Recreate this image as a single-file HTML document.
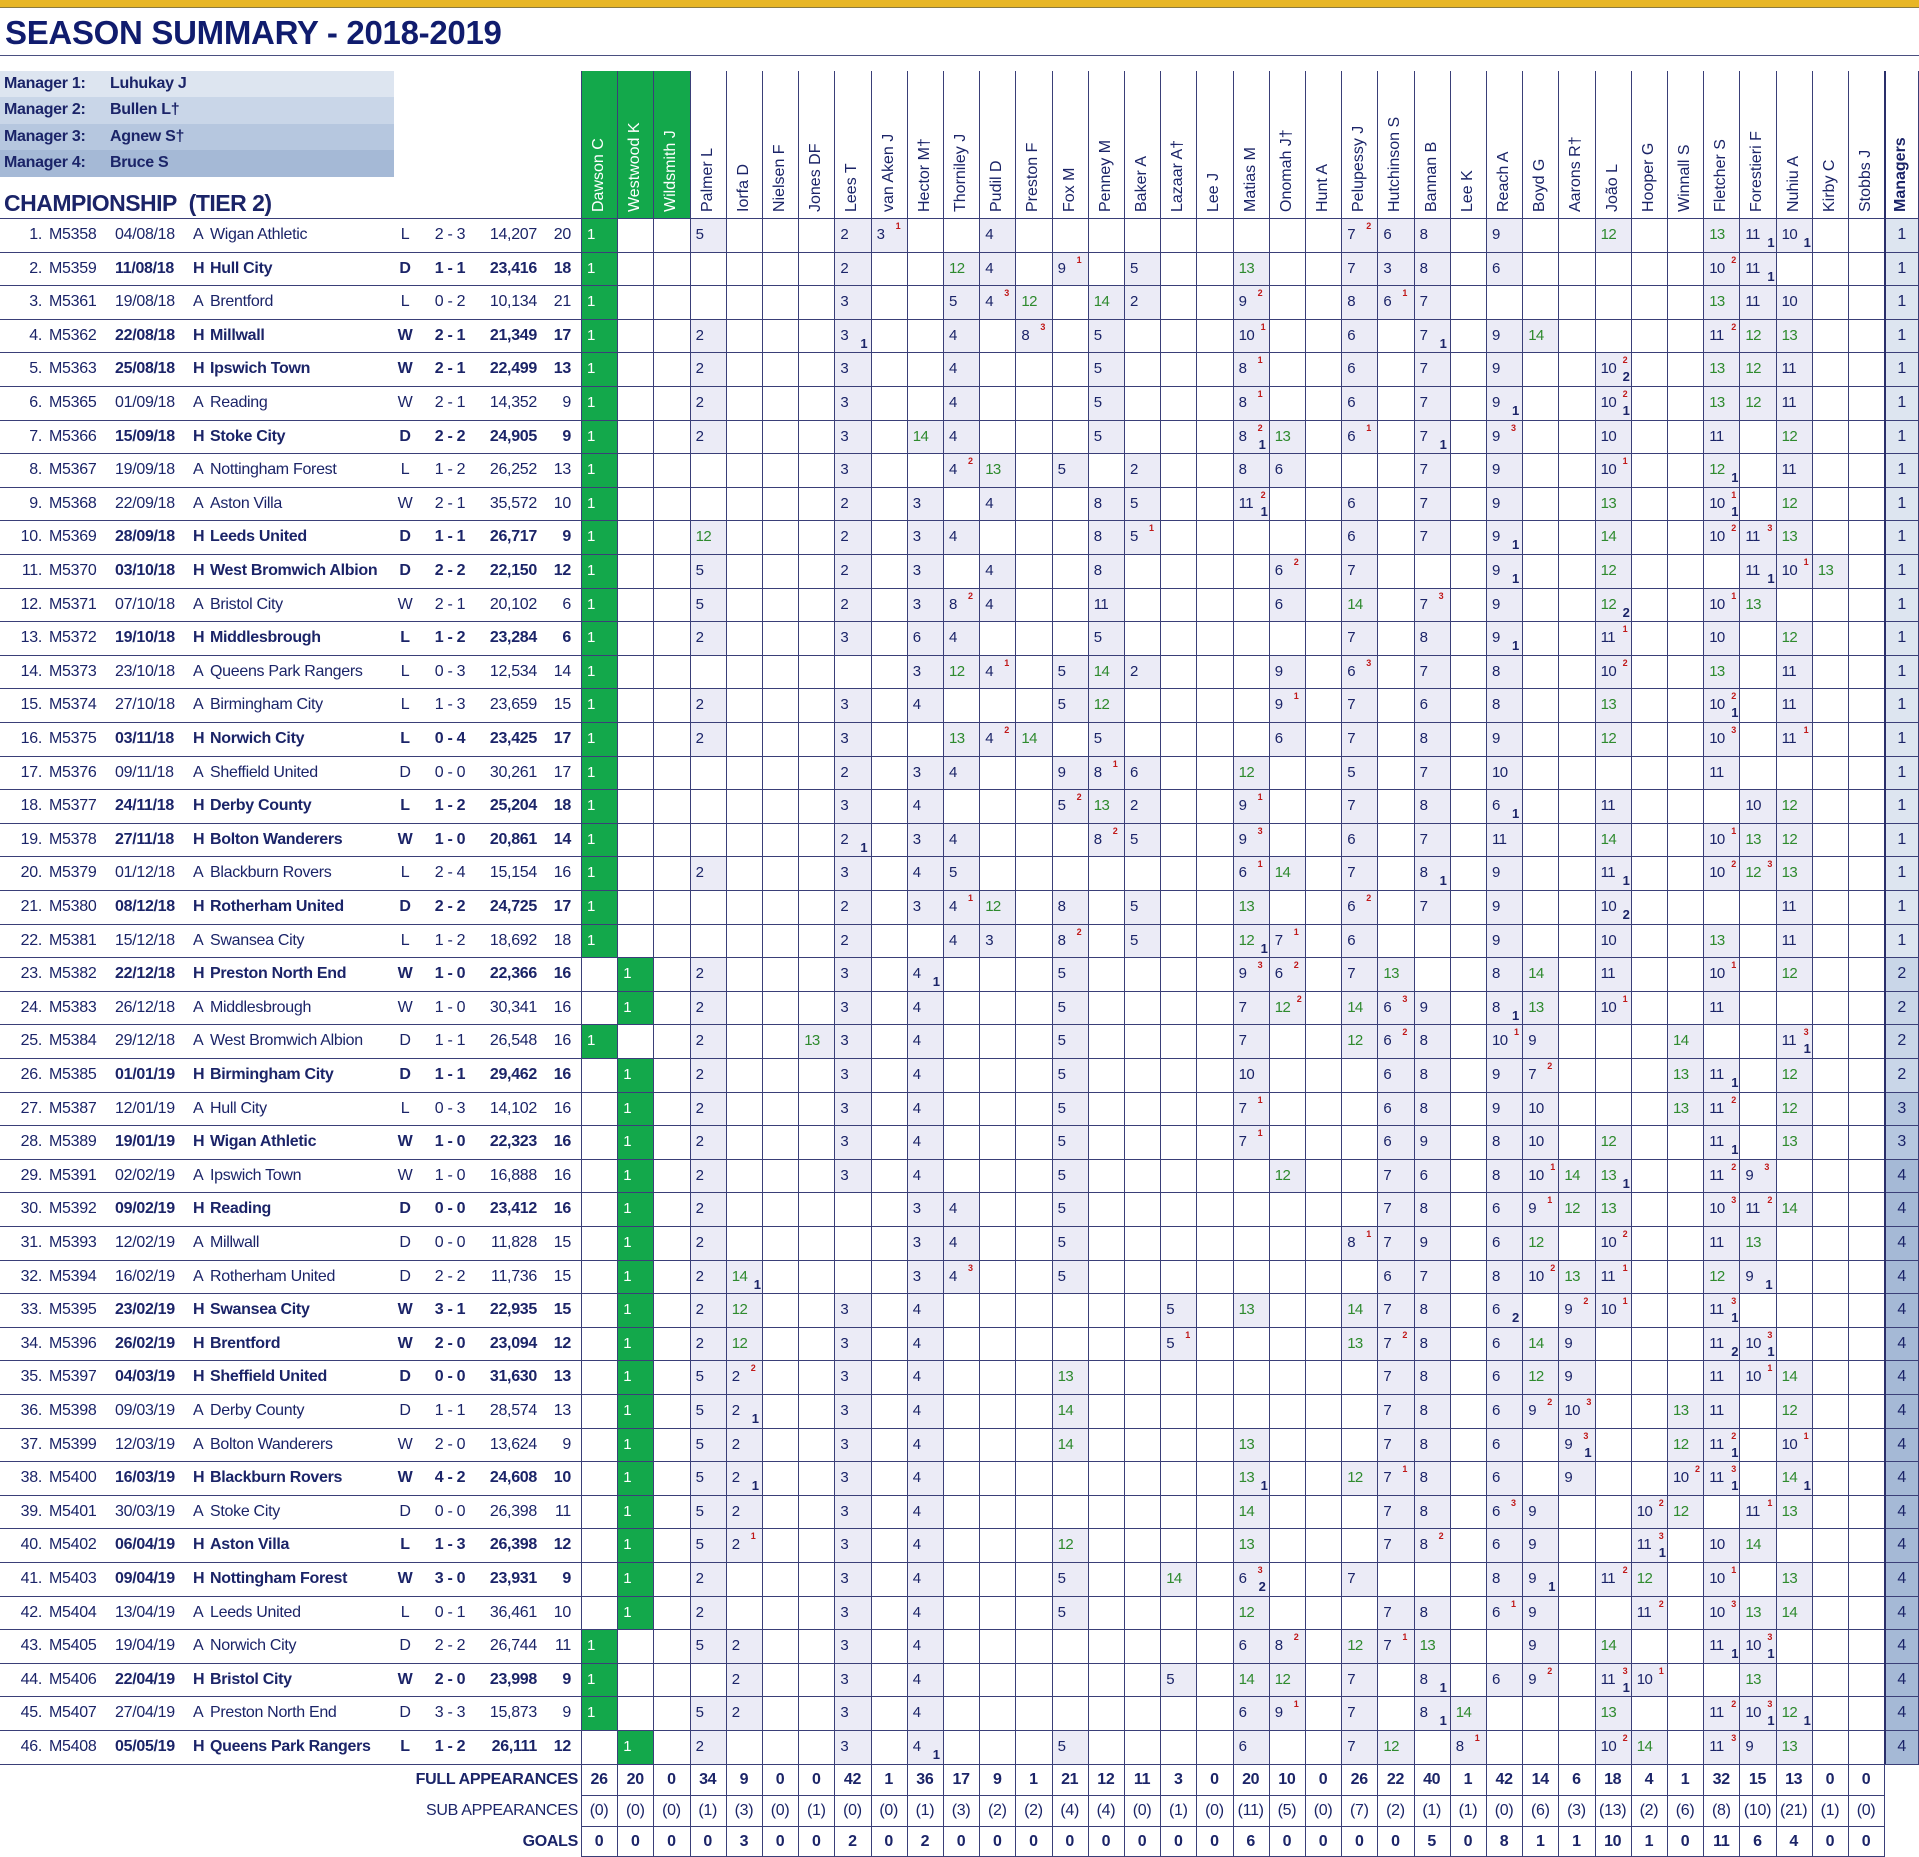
<!DOCTYPE html>
<html><head><meta charset="utf-8">
<style>
html,body{margin:0;padding:0;background:#fff}
#c{position:relative;width:1919px;height:1857px;overflow:hidden;font-family:"Liberation Sans Narrow","Liberation Sans",sans-serif;color:#1b2468}
.a{position:absolute;white-space:nowrap}
.hn{font-family:"Liberation Sans",sans-serif;font-size:16px;line-height:18px;transform-origin:0 0;transform:rotate(-90deg)}
.t{font-size:16px;line-height:16px;letter-spacing:-0.3px}
.n{font-size:15px;line-height:16px;letter-spacing:-0.6px}
.sp{font-family:"Liberation Sans",sans-serif;font-weight:bold;font-size:9px;color:#c01818}
.sb{font-family:"Liberation Sans",sans-serif;font-weight:bold;font-size:13px;color:#1b2468}
</style></head><body>
<div id="c">
<div class="a" style="left:0;top:0;width:1919px;height:7px;background:#e8b626"></div>
<div class="a" style="left:0;top:7px;width:1919px;height:1px;background:#8a7a40"></div>
<div class="a" style="left:5px;top:14px;font-family:'Liberation Sans',sans-serif;font-weight:bold;font-size:33px;color:#101c6e;letter-spacing:-0.3px">SEASON SUMMARY - 2018-2019</div>
<div class="a" style="left:0;top:55px;width:1919px;height:1px;background:#4a4f80"></div>
</div>
<script>
var C=document.getElementById('c');
function el(h){C.insertAdjacentHTML('beforeend',h);}
var mgrBg=['#dde5f0','#c9d6e8','#b6c7df','#a5b9d6'];
var mgrs=['Luhukay J','Bullen L\u2020','Agnew S\u2020','Bruce S'];
for(var i=0;i<4;i++){var y=71+i*26.3;
el('<div class="a" style="left:0;top:'+y+'px;width:394px;height:27px;background:'+mgrBg[i]+'"></div>');
el('<div class="a t" style="left:4px;top:'+(y+5)+'px;font-weight:bold">Manager '+(i+1)+':</div>');
el('<div class="a t" style="left:110px;top:'+(y+5)+'px;font-weight:bold">'+mgrs[i]+'</div>');}
el('<div class="a" style="left:4px;top:190px;font-size:23px;font-weight:bold;letter-spacing:-0.5px">CHAMPIONSHIP&nbsp; (TIER 2)</div>');
var names=['Dawson C','Westwood K','Wildsmith J','Palmer L','Iorfa D','Nielsen F','Jones DF','Lees T','van Aken J','Hector M\u2020','Thorniley J','Pudil D','Preston F','Fox M','Penney M','Baker A','Lazaar A\u2020','Lee J','Matias M','Onomah J\u2020','Hunt A','Pelupessy J','Hutchinson S','Bannan B','Lee K','Reach A','Boyd G','Aarons R\u2020','Jo\u00e3o L','Hooper G','Winnall S','Fletcher S','Forestieri F','Nuhiu A','Kirby C','Stobbs J'];
var X0=581,CW=36.2,MX=1884.3,MW=34.7,Y0=218,RH=33.6;
function cx(j){return X0+j*CW;}
el('<div class="a" style="left:'+X0+'px;top:71px;width:'+(3*CW)+'px;height:147px;background:#13a84b"></div>');
for(var j=0;j<36;j++){
el('<div class="a hn" style="left:'+(cx(j)+9)+'px;top:212px;color:'+(j<3?'#fff':'#1b2468')+'">'+names[j]+'</div>');}
el('<div class="a hn" style="left:'+(MX+8)+'px;top:212px;font-weight:bold">Managers</div>');
var rows=[
"1|M5358|04/08/18|A|Wigan Athletic|L|2 - 3|14,207|20|0:1 3:5 7:2 8:3^1 11:4 21:7^2 22:6 23:8 25:9 28:12 31:13 32:11_1 33:10_1",
"2|M5359|11/08/18|H|Hull City|D|1 - 1|23,416|18|0:1 7:2 10:12 11:4 13:9^1 15:5 18:13 21:7 22:3 23:8 25:6 31:10^2 32:11_1",
"3|M5361|19/08/18|A|Brentford|L|0 - 2|10,134|21|0:1 7:3 10:5 11:4^3 12:12 14:14 15:2 18:9^2 21:8 22:6^1 23:7 31:13 32:11 33:10",
"4|M5362|22/08/18|H|Millwall|W|2 - 1|21,349|17|0:1 3:2 7:3_1 10:4 12:8^3 14:5 18:10^1 21:6 23:7_1 25:9 26:14 31:11^2 32:12 33:13",
"5|M5363|25/08/18|H|Ipswich Town|W|2 - 1|22,499|13|0:1 3:2 7:3 10:4 14:5 18:8^1 21:6 23:7 25:9 28:10^2_2 31:13 32:12 33:11",
"6|M5365|01/09/18|A|Reading|W|2 - 1|14,352|9|0:1 3:2 7:3 10:4 14:5 18:8^1 21:6 23:7 25:9_1 28:10^2_1 31:13 32:12 33:11",
"7|M5366|15/09/18|H|Stoke City|D|2 - 2|24,905|9|0:1 3:2 7:3 9:14 10:4 14:5 18:8^2_1 19:13 21:6^1 23:7_1 25:9^3 28:10 31:11 33:12",
"8|M5367|19/09/18|A|Nottingham Forest|L|1 - 2|26,252|13|0:1 7:3 10:4^2 11:13 13:5 15:2 18:8 19:6 23:7 25:9 28:10^1 31:12_1 33:11",
"9|M5368|22/09/18|A|Aston Villa|W|2 - 1|35,572|10|0:1 7:2 9:3 11:4 14:8 15:5 18:11^2_1 21:6 23:7 25:9 28:13 31:10^1_1 33:12",
"10|M5369|28/09/18|H|Leeds United|D|1 - 1|26,717|9|0:1 3:12 7:2 9:3 10:4 14:8 15:5^1 21:6 23:7 25:9_1 28:14 31:10^2 32:11^3 33:13",
"11|M5370|03/10/18|H|West Bromwich Albion|D|2 - 2|22,150|12|0:1 3:5 7:2 9:3 11:4 14:8 19:6^2 21:7 25:9_1 28:12 32:11_1 33:10^1 34:13",
"12|M5371|07/10/18|A|Bristol City|W|2 - 1|20,102|6|0:1 3:5 7:2 9:3 10:8^2 11:4 14:11 19:6 21:14 23:7^3 25:9 28:12_2 31:10^1 32:13",
"13|M5372|19/10/18|H|Middlesbrough|L|1 - 2|23,284|6|0:1 3:2 7:3 9:6 10:4 14:5 21:7 23:8 25:9_1 28:11^1 31:10 33:12",
"14|M5373|23/10/18|A|Queens Park Rangers|L|0 - 3|12,534|14|0:1 9:3 10:12 11:4^1 13:5 14:14 15:2 19:9 21:6^3 23:7 25:8 28:10^2 31:13 33:11",
"15|M5374|27/10/18|A|Birmingham City|L|1 - 3|23,659|15|0:1 3:2 7:3 9:4 13:5 14:12 19:9^1 21:7 23:6 25:8 28:13 31:10^2_1 33:11",
"16|M5375|03/11/18|H|Norwich City|L|0 - 4|23,425|17|0:1 3:2 7:3 10:13 11:4^2 12:14 14:5 19:6 21:7 23:8 25:9 28:12 31:10^3 33:11^1",
"17|M5376|09/11/18|A|Sheffield United|D|0 - 0|30,261|17|0:1 7:2 9:3 10:4 13:9 14:8^1 15:6 18:12 21:5 23:7 25:10 31:11",
"18|M5377|24/11/18|H|Derby County|L|1 - 2|25,204|18|0:1 7:3 9:4 13:5^2 14:13 15:2 18:9^1 21:7 23:8 25:6_1 28:11 32:10 33:12",
"19|M5378|27/11/18|H|Bolton Wanderers|W|1 - 0|20,861|14|0:1 7:2_1 9:3 10:4 14:8^2 15:5 18:9^3 21:6 23:7 25:11 28:14 31:10^1 32:13 33:12",
"20|M5379|01/12/18|A|Blackburn Rovers|L|2 - 4|15,154|16|0:1 3:2 7:3 9:4 10:5 18:6^1 19:14 21:7 23:8_1 25:9 28:11_1 31:10^2 32:12^3 33:13",
"21|M5380|08/12/18|H|Rotherham United|D|2 - 2|24,725|17|0:1 7:2 9:3 10:4^1 11:12 13:8 15:5 18:13 21:6^2 23:7 25:9 28:10_2 33:11",
"22|M5381|15/12/18|A|Swansea City|L|1 - 2|18,692|18|0:1 7:2 10:4 11:3 13:8^2 15:5 18:12_1 19:7^1 21:6 25:9 28:10 31:13 33:11",
"23|M5382|22/12/18|H|Preston North End|W|1 - 0|22,366|16|1:1 3:2 7:3 9:4_1 13:5 18:9^3 19:6^2 21:7 22:13 25:8 26:14 28:11 31:10^1 33:12",
"24|M5383|26/12/18|A|Middlesbrough|W|1 - 0|30,341|16|1:1 3:2 7:3 9:4 13:5 18:7 19:12^2 21:14 22:6^3 23:9 25:8_1 26:13 28:10^1 31:11",
"25|M5384|29/12/18|A|West Bromwich Albion|D|1 - 1|26,548|16|0:1 3:2 6:13 7:3 9:4 13:5 18:7 21:12 22:6^2 23:8 25:10^1 26:9 30:14 33:11^3_1",
"26|M5385|01/01/19|H|Birmingham City|D|1 - 1|29,462|16|1:1 3:2 7:3 9:4 13:5 18:10 22:6 23:8 25:9 26:7^2 30:13 31:11_1 33:12",
"27|M5387|12/01/19|A|Hull City|L|0 - 3|14,102|16|1:1 3:2 7:3 9:4 13:5 18:7^1 22:6 23:8 25:9 26:10 30:13 31:11^2 33:12",
"28|M5389|19/01/19|H|Wigan Athletic|W|1 - 0|22,323|16|1:1 3:2 7:3 9:4 13:5 18:7^1 22:6 23:9 25:8 26:10 28:12 31:11_1 33:13",
"29|M5391|02/02/19|A|Ipswich Town|W|1 - 0|16,888|16|1:1 3:2 7:3 9:4 13:5 19:12 22:7 23:6 25:8 26:10^1 27:14 28:13_1 31:11^2 32:9^3",
"30|M5392|09/02/19|H|Reading|D|0 - 0|23,412|16|1:1 3:2 9:3 10:4 13:5 22:7 23:8 25:6 26:9^1 27:12 28:13 31:10^3 32:11^2 33:14",
"31|M5393|12/02/19|A|Millwall|D|0 - 0|11,828|15|1:1 3:2 9:3 10:4 13:5 21:8^1 22:7 23:9 25:6 26:12 28:10^2 31:11 32:13",
"32|M5394|16/02/19|A|Rotherham United|D|2 - 2|11,736|15|1:1 3:2 4:14_1 9:3 10:4^3 13:5 22:6 23:7 25:8 26:10^2 27:13 28:11^1 31:12 32:9_1",
"33|M5395|23/02/19|H|Swansea City|W|3 - 1|22,935|15|1:1 3:2 4:12 7:3 9:4 16:5 18:13 21:14 22:7 23:8 25:6_2 27:9^2 28:10^1 31:11^3_1",
"34|M5396|26/02/19|H|Brentford|W|2 - 0|23,094|12|1:1 3:2 4:12 7:3 9:4 16:5^1 21:13 22:7^2 23:8 25:6 26:14 27:9 31:11_2 32:10^3_1",
"35|M5397|04/03/19|H|Sheffield United|D|0 - 0|31,630|13|1:1 3:5 4:2^2 7:3 9:4 13:13 22:7 23:8 25:6 26:12 27:9 31:11 32:10^1 33:14",
"36|M5398|09/03/19|A|Derby County|D|1 - 1|28,574|13|1:1 3:5 4:2_1 7:3 9:4 13:14 22:7 23:8 25:6 26:9^2 27:10^3 30:13 31:11 33:12",
"37|M5399|12/03/19|A|Bolton Wanderers|W|2 - 0|13,624|9|1:1 3:5 4:2 7:3 9:4 13:14 18:13 22:7 23:8 25:6 27:9^3_1 30:12 31:11^2_1 33:10^1",
"38|M5400|16/03/19|H|Blackburn Rovers|W|4 - 2|24,608|10|1:1 3:5 4:2_1 7:3 9:4 18:13_1 21:12 22:7^1 23:8 25:6 27:9 30:10^2 31:11^3_1 33:14_1",
"39|M5401|30/03/19|A|Stoke City|D|0 - 0|26,398|11|1:1 3:5 4:2 7:3 9:4 18:14 22:7 23:8 25:6^3 26:9 29:10^2 30:12 32:11^1 33:13",
"40|M5402|06/04/19|H|Aston Villa|L|1 - 3|26,398|12|1:1 3:5 4:2^1 7:3 9:4 13:12 18:13 22:7 23:8^2 25:6 26:9 29:11^3_1 31:10 32:14",
"41|M5403|09/04/19|H|Nottingham Forest|W|3 - 0|23,931|9|1:1 3:2 7:3 9:4 13:5 16:14 18:6^3_2 21:7 25:8 26:9_1 28:11^2 29:12 31:10^1 33:13",
"42|M5404|13/04/19|A|Leeds United|L|0 - 1|36,461|10|1:1 3:2 7:3 9:4 13:5 18:12 22:7 23:8 25:6^1 26:9 29:11^2 31:10^3 32:13 33:14",
"43|M5405|19/04/19|A|Norwich City|D|2 - 2|26,744|11|0:1 3:5 4:2 7:3 9:4 18:6 19:8^2 21:12 22:7^1 23:13 26:9 28:14 31:11_1 32:10^3_1",
"44|M5406|22/04/19|H|Bristol City|W|2 - 0|23,998|9|0:1 4:2 7:3 9:4 16:5 18:14 19:12 21:7 23:8_1 25:6 26:9^2 28:11^3_1 29:10^1 32:13",
"45|M5407|27/04/19|A|Preston North End|D|3 - 3|15,873|9|0:1 3:5 4:2 7:3 9:4 18:6 19:9^1 21:7 23:8_1 24:14 28:13 31:11^2 32:10^3_1 33:12_1",
"46|M5408|05/05/19|H|Queens Park Rangers|L|1 - 2|26,111|12|1:1 3:2 7:3 9:4_1 13:5 18:6 21:7 22:12 24:8^1 28:10^2 29:14 31:11^3 32:9 33:13"];
var h='';
for(var r=0;r<46;r++){
 var p=rows[r].split('|'),y=Y0+r*RH,m=r<22?0:r<26?1:r<28?2:3,b=p[3]=='H'?'font-weight:bold;':'';
 var ty=y+9;
 h+='<div class="a t" style="left:0;width:42px;text-align:right;top:'+ty+'px">'+p[0]+'.</div>';
 h+='<div class="a t" style="left:49px;top:'+ty+'px">'+p[1]+'</div>';
 h+='<div class="a t" style="left:115px;top:'+ty+'px;'+b+'">'+p[2]+'</div>';
 h+='<div class="a t" style="left:193px;top:'+ty+'px;'+b+'">'+p[3]+'</div>';
 h+='<div class="a t" style="left:210px;top:'+ty+'px;'+b+'">'+p[4]+'</div>';
 h+='<div class="a t" style="left:390px;width:30px;text-align:center;top:'+ty+'px;'+b+'">'+p[5]+'</div>';
 h+='<div class="a t" style="left:425px;width:50px;text-align:center;top:'+ty+'px;'+b+'">'+p[6]+'</div>';
 h+='<div class="a t" style="left:480px;width:57px;text-align:right;top:'+ty+'px;'+b+'">'+p[7]+'</div>';
 h+='<div class="a t" style="left:545px;width:26px;text-align:right;top:'+ty+'px;'+b+'">'+p[8]+'</div>';
 h+='<div class="a" style="left:'+MX+'px;top:'+y+'px;width:'+MW+'px;height:'+RH+'px;background:'+mgrBg[m]+'"></div>';
 h+='<div class="a t" style="left:'+MX+'px;width:'+MW+'px;text-align:center;top:'+ty+'px">'+(m+1)+'</div>';
 var cs=p[9].split(' ');
 for(var k=0;k<cs.length;k++){
  var q=cs[k].split(':'),j=+q[0],v=q[1],sp='',sb='';
  var mm=v.match(/^(\d+)(\^(\d))?(_(\d))?$/);v=mm[1];sp=mm[3]||'';sb=mm[5]||'';
  var x=cx(j),gk=j<3,n=+v;
  h+='<div class="a" style="left:'+x+'px;top:'+y+'px;width:'+CW+'px;height:'+RH+'px;background:'+(gk?'#13a84b':'#ebebf6')+'"></div>';
  h+='<div class="a n" style="left:'+(x+6)+'px;top:'+ty+'px;color:'+(gk?'#fff':(n>=12?'#2e8a2e':'#1b2468'))+'">'+v+'</div>';
  if(sp)h+='<div class="a sp" style="left:'+(x+(n>=10?28:25))+'px;top:'+(y+3)+'px">'+sp+'</div>';
  if(sb)h+='<div class="a sb" style="left:'+(x+(n>=10?28:26))+'px;top:'+(y+17)+'px">'+sb+'</div>';
 }
}
el(h);h='';
for(var r=0;r<=46;r++){var y=Math.round(Y0+r*RH);h+='<div class="a" style="left:0;top:'+y+'px;width:1919px;height:1px;background:#3a3f78"></div>';}
var SY=[1764,1795,1826,1856];
for(var s=1;s<4;s++)h+='<div class="a" style="left:'+X0+'px;top:'+SY[s]+'px;width:'+(MX-X0)+'px;height:1px;background:#3a3f78"></div>';
for(var j=0;j<=36;j++){var x=Math.round(cx(j));h+='<div class="a" style="left:'+x+'px;top:71px;width:1px;height:1786px;background:#3a3f78"></div>';}
h+='<div class="a" style="left:'+Math.round(MX)+'px;top:71px;width:2px;height:1693px;background:#2a2f6a"></div>';
h+='<div class="a" style="left:1918px;top:71px;width:1px;height:1693px;background:#3a3f78"></div>';
var full='26 20 0 34 9 0 0 42 1 36 17 9 1 21 12 11 3 0 20 10 0 26 22 40 1 42 14 6 18 4 1 32 15 13 0 0'.split(' ');
var sub='0 0 0 1 3 0 1 0 0 1 3 2 2 4 4 0 1 0 11 5 0 7 2 1 1 0 6 3 13 2 6 8 10 21 1 0'.split(' ');
var gl='0 0 0 0 3 0 0 2 0 2 0 0 0 0 0 0 0 0 6 0 0 0 0 5 0 8 1 1 10 1 0 11 6 4 0 0'.split(' ');
var labs=['FULL APPEARANCES','SUB APPEARANCES','GOALS'],dat=[full,sub,gl];
for(var s=0;s<3;s++){var ty=SY[s]+8,bw=s==1?'':'font-weight:bold;';
 h+='<div class="a t" style="left:300px;width:278px;text-align:right;top:'+ty+'px;'+bw+'">'+labs[s]+'</div>';
 for(var j=0;j<36;j++)h+='<div class="a t" style="left:'+cx(j)+'px;width:'+CW+'px;text-align:center;top:'+ty+'px;'+bw+'">'+(s==1?'('+dat[s][j]+')':dat[s][j])+'</div>';}
el(h);
</script>
</body></html>
